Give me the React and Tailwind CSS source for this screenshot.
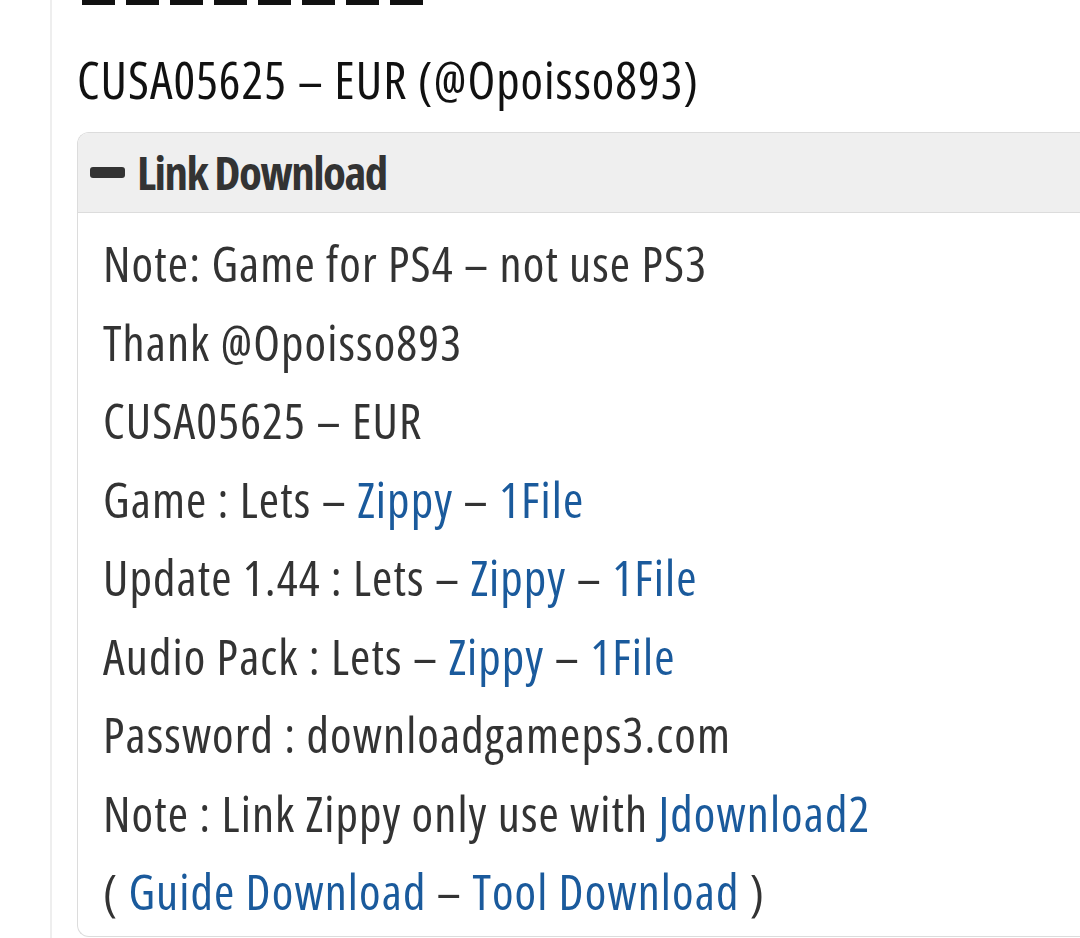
import React from 'react';

const font = { fontFamily: '"Open Sans", "DejaVu Sans Condensed", sans-serif' };

function A({ children }) {
  return <a className="text-[#1a5a9c]">{children}</a>;
}

export default function App() {
  const lines = [
    <>Note: Game for PS4 – not use PS3</>,
    <>Thank @Opoisso893</>,
    <>CUSA05625 – EUR</>,
    <>Game : Lets – <A>Zippy</A> – <A>1File</A></>,
    <>Update 1.44 : Lets – <A>Zippy</A> – <A>1File</A></>,
    <>Audio Pack : Lets – <A>Zippy</A> – <A>1File</A></>,
    <>Password : downloadgameps3.com</>,
    <>Note : Link Zippy only use with <A>Jdownload2</A></>,
    <>( <A>Guide Download</A> – <A>Tool Download</A> )</>,
  ];

  return (
    <div className="w-[1080px] h-[938px] overflow-hidden bg-white flex font-stretch-[75%]" style={font}>
      <div className="w-[50px] shrink-0" />
      <div className="w-[2px] shrink-0 bg-[#eeeeee]" />
      <div className="flex-1 pl-[25px]">
        {/* dashed separator, cut off by the top edge */}
        <div className="flex gap-[11px] pl-[5px] h-[5px]">
          {Array.from({ length: 8 }).map((_, i) => (
            <div key={i} className="w-[33px] h-[5px] bg-[#111]" />
          ))}
        </div>
        <p className="mt-[44px] text-[51px] leading-[60px] tracking-[1px] text-[#111]">
          CUSA05625 – EUR (@Opoisso893)
        </p>
        <div className="mt-[23px] border border-[#dcdcdc] border-r-0 rounded-l-[12px] overflow-hidden">
          <div className="h-[80px] bg-[#efefef] border-b border-[#dcdcdc] flex items-center pl-[12px] gap-[12px]">
            <div className="w-[35px] h-[11px] rounded-[3px] bg-[#333]" />
            <span className="text-[47px] font-bold text-[#333] tracking-[-1.5px]">Link Download</span>
          </div>
          <div className="pl-[25px] pt-[11px] pb-[5px] text-[49px] leading-[78.5px] tracking-[1.1px] text-[#333]">
            {lines.map((l, i) => (
              <p key={i} className="whitespace-nowrap">{l}</p>
            ))}
          </div>
        </div>
      </div>
    </div>
  );
}
